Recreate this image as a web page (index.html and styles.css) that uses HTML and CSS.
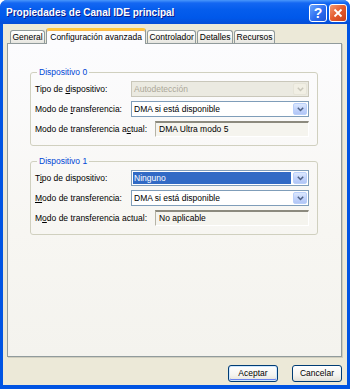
FILE: index.html
```html
<!DOCTYPE html>
<html lang="es">
<head>
    <meta charset="UTF-8">
    <title>Propiedades de Canal IDE principal</title>
    <link rel="stylesheet" href="styles.css">
</head>
<body>
    <div class="window">
        <div class="titlebar">
            <span class="title">Propiedades de Canal IDE principal</span>
            <div class="caption">
                <span class="cbtn help">?</span>
                <span class="cbtn close">
                    <svg viewBox="0 0 10 10" width="10" height="10"><path d="M1.5 1.5l7 7M8.5 1.5l-7 7" stroke="#fff" stroke-width="1.8" fill="none"/></svg>
                </span>
            </div>
        </div>

        <div class="client">
            <div class="tabs">
                <span class="tab">General</span>
                <span class="tab active">Configuración avanzada</span>
                <span class="tab">Controlador</span>
                <span class="tab">Detalles</span>
                <span class="tab">Recursos</span>
            </div>

            <div class="panel">
                <fieldset class="group">
                    <legend>Dispositivo 0</legend>
                    <div class="row">
                        <span class="lbl">Tipo de <u>d</u>ispositivo:</span>
                        <div class="combo disabled">
                            <span class="value">Autodetección</span>
                            <span class="drop"><svg viewBox="0 0 7 5" width="7" height="5"><path d="M0.8 0.8l2.7 2.7 2.7-2.7" fill="none" stroke-width="1.5"/></svg></span>
                        </div>
                    </div>
                    <div class="row">
                        <span class="lbl">Modo de <u>t</u>ransferencia:</span>
                        <div class="combo">
                            <span class="value">DMA si está disponible</span>
                            <span class="drop"><svg viewBox="0 0 7 5" width="7" height="5"><path d="M0.8 0.8l2.7 2.7 2.7-2.7" fill="none" stroke-width="1.5"/></svg></span>
                        </div>
                    </div>
                    <div class="row">
                        <span class="lbl wide">Modo de transferencia a<u>c</u>tual:</span>
                        <div class="field">DMA Ultra modo 5</div>
                    </div>
                </fieldset>

                <fieldset class="group">
                    <legend>Dispositivo 1</legend>
                    <div class="row">
                        <span class="lbl">T<u>i</u>po de dispositivo:</span>
                        <div class="combo focused">
                            <span class="value">Ninguno</span>
                            <span class="drop"><svg viewBox="0 0 7 5" width="7" height="5"><path d="M0.8 0.8l2.7 2.7 2.7-2.7" fill="none" stroke-width="1.5"/></svg></span>
                        </div>
                    </div>
                    <div class="row">
                        <span class="lbl"><u>M</u>odo de transferencia:</span>
                        <div class="combo">
                            <span class="value">DMA si está disponible</span>
                            <span class="drop"><svg viewBox="0 0 7 5" width="7" height="5"><path d="M0.8 0.8l2.7 2.7 2.7-2.7" fill="none" stroke-width="1.5"/></svg></span>
                        </div>
                    </div>
                    <div class="row">
                        <span class="lbl wide">M<u>o</u>do de transferencia actual:</span>
                        <div class="field">No aplicable</div>
                    </div>
                </fieldset>
            </div>

            <div class="buttons">
                <span class="btn default">Aceptar</span>
                <span class="btn">Cancelar</span>
            </div>
        </div>
    </div>
</body>
</html>
```

FILE: styles.css
```css
html, body {
    margin: 0;
    padding: 0;
    background: #fff;
}

body {
    font-family: "Liberation Sans", Arial, sans-serif;
    font-size: 8.5px;
    color: #000;
}

u {
    text-decoration: underline;
    text-underline-offset: 1px;
}

/* ventana XP */
.window {
    width: 350px;
    height: 389px;
    box-sizing: border-box;
    display: flex;
    flex-direction: column;
    background: #0054e3;
    border-radius: 7px 7px 0 0;
    overflow: hidden;
}

.titlebar {
    height: 24px;
    flex: none;
    display: flex;
    align-items: center;
    justify-content: space-between;
    padding: 0 3px 0 6px;
    background: linear-gradient(to bottom, #4a97fb 0, #1467f2 3px, #055ded 40%, #0058ea 75%, #064dd6 100%);
}

.title {
    color: #fff;
    font-weight: bold;
    font-size: 10px;
    text-shadow: 1px 1px 0 #0a1a8a;
    margin-top: 1px;
}

.caption {
    display: flex;
    gap: 2px;
    margin-top: 1px;
}

.cbtn {
    width: 18px;
    height: 18px;
    box-sizing: border-box;
    border: 1px solid #fff;
    border-radius: 3px;
    display: flex;
    align-items: center;
    justify-content: center;
    color: #fff;
    font-weight: bold;
    font-size: 14px;
}

.help {
    background: linear-gradient(135deg, #6aa6ff 0%, #2b6cf0 55%, #1e54d6 100%);
}

.close {
    background: linear-gradient(135deg, #f39a74 0%, #e45a2d 50%, #c8401c 100%);
}

/* área cliente */
.client {
    flex: 1;
    margin: 0 3px 4px 3px;
    background: #ece9d8;
    padding: 4px 0 0 4px;
    display: flex;
    flex-direction: column;
}

.tabs {
    display: flex;
    align-items: flex-end;
    height: 15px;
    padding-left: 3px;
    position: relative;
    z-index: 1;
}

.tab {
    height: 12px;
    line-height: 12px;
    padding: 0 1.5px;
    margin-right: 1px;
    border: 1px solid #919b9c;
    border-bottom: none;
    border-radius: 3px 3px 0 0;
    background: linear-gradient(to bottom, #fff 0, #f6f6f2 50%, #e6e5df 100%);
}

.tab.active {
    height: 14px;
    line-height: 14px;
    padding: 0 3px;
    margin: 0 1px -1px 0;
    border-top: 2px solid #ffc83c;
    box-shadow: inset 0 1px 0 #f9b64a;
    background: #fcfcfe;
}

.panel {
    width: 335px;
    height: 314px;
    box-sizing: border-box;
    border: 1px solid #919b9c;
    box-shadow: 1px 1px 0 #d0cebf;
    background: linear-gradient(to bottom, #fcfcfe 0%, #f7f6f2 60%, #f4f3ee 100%);
    padding: 23px 0 0 22px;
}

/* grupos */
.group {
    width: 288px;
    box-sizing: border-box;
    margin: 0 0 10px 0;
    padding: 4px 8px 8px 4px;
    border: 1px solid #d0d0bf;
    border-radius: 3px;
    min-inline-size: 0;
}

.group legend {
    color: #0046d5;
    line-height: 10px;
    padding: 0 2px;
    margin-left: 2px;
}

.row {
    display: flex;
    align-items: center;
    height: 16px;
    margin-bottom: 4px;
}

.row:last-child {
    margin-bottom: 0;
}

.lbl {
    width: 96px;
    flex: none;
    white-space: nowrap;
}

.lbl.wide {
    width: 120px;
}

.combo {
    width: 178px;
    height: 16px;
    box-sizing: border-box;
    border: 1px solid #7f9db9;
    background: #fff;
    display: flex;
    align-items: stretch;
}

.combo .value {
    flex: 1;
    line-height: 14px;
    padding-left: 2px;
    margin-right: 1px;
}

.combo.focused .value {
    background: #316ac5;
    color: #fff;
    margin: 1px;
    line-height: 12px;
    padding-left: 1px;
}

.drop {
    width: 14px;
    margin: 1px;
    box-sizing: border-box;
    border: 1px solid #b9cffa;
    border-radius: 2px;
    background: linear-gradient(to bottom, #dce8fd 0%, #c3d4fb 50%, #b2c6f6 100%);
    display: flex;
    align-items: center;
    justify-content: center;
}

.drop svg path {
    stroke: #4d6185;
}

.combo.disabled {
    border-color: #c9c7ba;
    background: #ebeae1;
    color: #aca899;
}

.combo.disabled .drop {
    border-color: #e6e4d8;
    background: #f1efe4;
}

.combo.disabled .drop svg path {
    stroke: #c9c7ba;
}

.field {
    width: 154px;
    height: 16px;
    box-sizing: border-box;
    border-top: 2px solid #8c8a7e;
    border-left: 1px solid #b5b3a6;
    border-right: 1px solid #fff;
    border-bottom: 1px solid #fff;
    background: #f5f4ee;
    line-height: 13px;
    padding-left: 3px;
}

/* botones */
.buttons {
    display: flex;
    justify-content: flex-end;
    gap: 14px;
    margin-top: 8px;
    padding-right: 5px;
}

.btn {
    width: 50px;
    height: 17px;
    box-sizing: border-box;
    border: 1px solid #003c74;
    border-radius: 3px;
    background: linear-gradient(to bottom, #fff 0%, #f5f4f0 60%, #e3e1d8 100%);
    text-align: center;
    line-height: 15px;
}

.btn.default {
    box-shadow: inset 0 0 0 1px #cee7ff, inset 0 -1px 0 1px #6982ee;
}
```
